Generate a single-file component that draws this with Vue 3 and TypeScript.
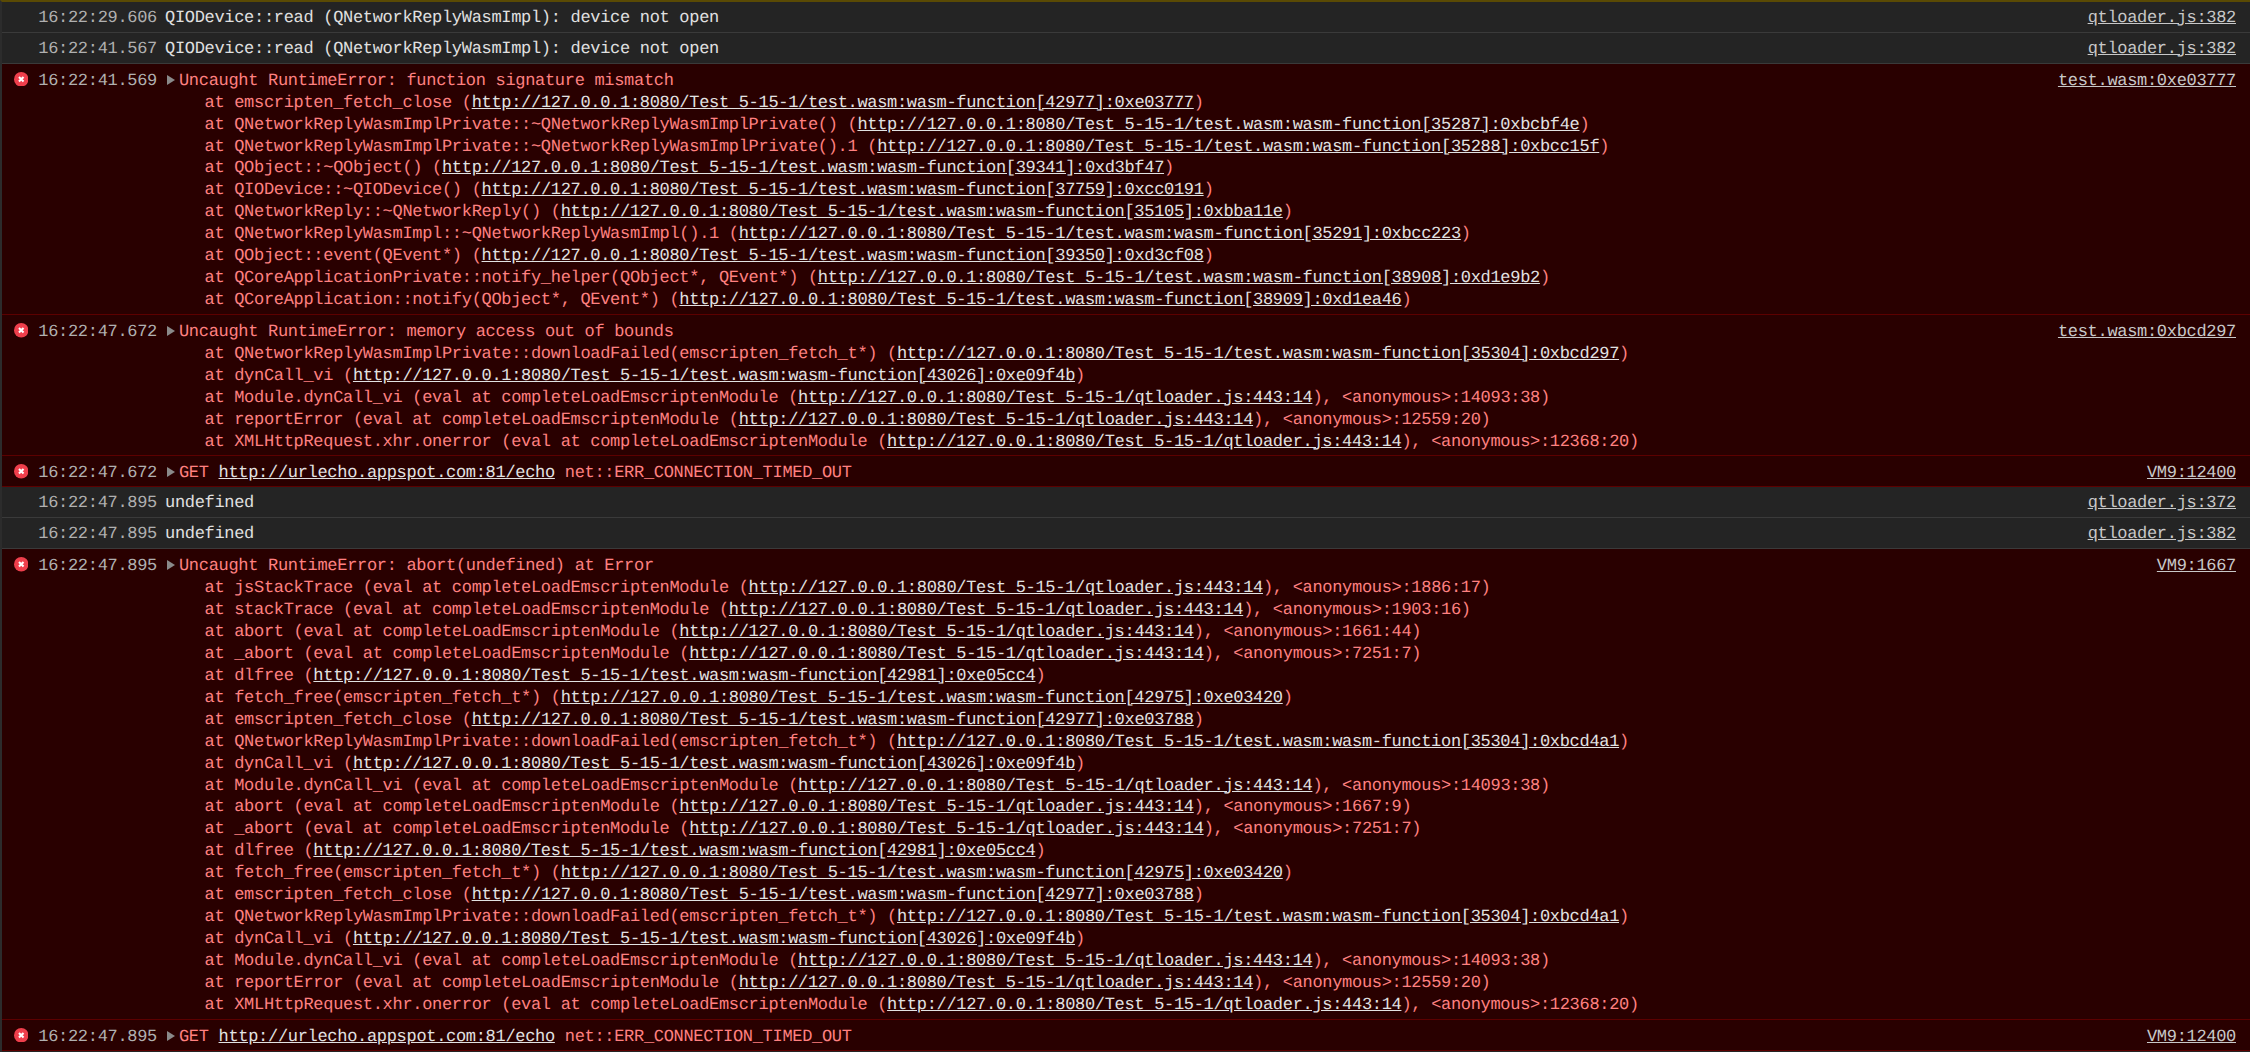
<script setup lang="ts">
type Seg = { t: string; u?: boolean };
type Row = { time: string; err?: boolean; msg?: string; head?: Seg[]; stack?: Seg[][]; src: string };
const B = 'http://127.0.0.1:8080/Test_5-15-1/';
const w = (before: string, url: string): Seg[] => [{ t: '    at ' + before + ' (' }, { t: B + url, u: true }, { t: ')' }];
const q = (before: string, n: string): Seg[] => [{ t: '    at ' + before + ' (eval at completeLoadEmscriptenModule (' }, { t: B + 'qtloader.js:443:14', u: true }, { t: '), <anonymous>:' + n + ')' }];
const wasm = (n: string, a: string) => 'test.wasm:wasm-function[' + n + ']:' + a;
const get: Seg[] = [{ t: 'GET ' }, { t: 'http://urlecho.appspot.com:81/echo', u: true }, { t: ' net::ERR_CONNECTION_TIMED_OUT' }];
const rows: Row[] = [
  { time: '16:22:29.606', msg: 'QIODevice::read (QNetworkReplyWasmImpl): device not open', src: 'qtloader.js:382' },
  { time: '16:22:41.567', msg: 'QIODevice::read (QNetworkReplyWasmImpl): device not open', src: 'qtloader.js:382' },
  { time: '16:22:41.569', err: true, head: [{ t: 'Uncaught RuntimeError: function signature mismatch' }], src: 'test.wasm:0xe03777', stack: [
    w('emscripten_fetch_close', wasm('42977', '0xe03777')),
    w('QNetworkReplyWasmImplPrivate::~QNetworkReplyWasmImplPrivate()', wasm('35287', '0xbcbf4e')),
    w('QNetworkReplyWasmImplPrivate::~QNetworkReplyWasmImplPrivate().1', wasm('35288', '0xbcc15f')),
    w('QObject::~QObject()', wasm('39341', '0xd3bf47')),
    w('QIODevice::~QIODevice()', wasm('37759', '0xcc0191')),
    w('QNetworkReply::~QNetworkReply()', wasm('35105', '0xbba11e')),
    w('QNetworkReplyWasmImpl::~QNetworkReplyWasmImpl().1', wasm('35291', '0xbcc223')),
    w('QObject::event(QEvent*)', wasm('39350', '0xd3cf08')),
    w('QCoreApplicationPrivate::notify_helper(QObject*, QEvent*)', wasm('38908', '0xd1e9b2')),
    w('QCoreApplication::notify(QObject*, QEvent*)', wasm('38909', '0xd1ea46')),
  ] },
  { time: '16:22:47.672', err: true, head: [{ t: 'Uncaught RuntimeError: memory access out of bounds' }], src: 'test.wasm:0xbcd297', stack: [
    w('QNetworkReplyWasmImplPrivate::downloadFailed(emscripten_fetch_t*)', wasm('35304', '0xbcd297')),
    w('dynCall_vi', wasm('43026', '0xe09f4b')),
    q('Module.dynCall_vi', '14093:38'),
    q('reportError', '12559:20'),
    q('XMLHttpRequest.xhr.onerror', '12368:20'),
  ] },
  { time: '16:22:47.672', err: true, head: get, src: 'VM9:12400' },
  { time: '16:22:47.895', msg: 'undefined', src: 'qtloader.js:372' },
  { time: '16:22:47.895', msg: 'undefined', src: 'qtloader.js:382' },
  { time: '16:22:47.895', err: true, head: [{ t: 'Uncaught RuntimeError: abort(undefined) at Error' }], src: 'VM9:1667', stack: [
    q('jsStackTrace', '1886:17'),
    q('stackTrace', '1903:16'),
    q('abort', '1661:44'),
    q('_abort', '7251:7'),
    w('dlfree', wasm('42981', '0xe05cc4')),
    w('fetch_free(emscripten_fetch_t*)', wasm('42975', '0xe03420')),
    w('emscripten_fetch_close', wasm('42977', '0xe03788')),
    w('QNetworkReplyWasmImplPrivate::downloadFailed(emscripten_fetch_t*)', wasm('35304', '0xbcd4a1')),
    w('dynCall_vi', wasm('43026', '0xe09f4b')),
    q('Module.dynCall_vi', '14093:38'),
    q('abort', '1667:9'),
    q('_abort', '7251:7'),
    w('dlfree', wasm('42981', '0xe05cc4')),
    w('fetch_free(emscripten_fetch_t*)', wasm('42975', '0xe03420')),
    w('emscripten_fetch_close', wasm('42977', '0xe03788')),
    w('QNetworkReplyWasmImplPrivate::downloadFailed(emscripten_fetch_t*)', wasm('35304', '0xbcd4a1')),
    w('dynCall_vi', wasm('43026', '0xe09f4b')),
    q('Module.dynCall_vi', '14093:38'),
    q('reportError', '12559:20'),
    q('XMLHttpRequest.xhr.onerror', '12368:20'),
  ] },
  { time: '16:22:47.895', err: true, head: get, src: 'VM9:12400' },
];
</script>

<template>
  <div class="console">
    <div v-for="(r, i) in rows" :key="i" class="row" :class="{ err: r.err, multi: r.stack }">
      <svg v-if="r.err" class="icon" viewBox="0 0 14 14">
        <circle cx="7" cy="7" r="7" fill="#ef3f4c" />
        <path d="M4.8 4.8l4.4 4.4M9.2 4.8l-4.4 4.4" stroke="#fff" stroke-width="2" fill="none" />
      </svg>
      <span class="time">{{ r.time }}</span>
      <div class="body">
        <div v-if="r.msg" class="line plain">{{ r.msg }}</div>
        <template v-else>
          <div class="line"><svg class="tri" viewBox="0 0 8 10"><path d="M0 0l8 5-8 5z" fill="#8a8a8a" /></svg><template v-for="(s, j) in r.head" :key="j"><a v-if="s.u" class="link">{{ s.t }}</a><span v-else>{{ s.t }}</span></template></div>
          <div v-for="(l, k) in r.stack" :key="k" class="line"><template v-for="(s, j) in l" :key="j"><a v-if="s.u" class="link">{{ s.t }}</a><span v-else>{{ s.t }}</span></template></div>
        </template>
      </div>
      <a class="src">{{ r.src }}</a>
    </div>
  </div>
</template>

<style scoped>
.console {
  width: 2250px;
  height: 1052px;
  overflow: hidden;
  box-sizing: border-box;
  background: #242424;
  border-top: 2px solid #5a4a04;
  border-left: 2px solid #2c2c2c;
  font-family: "Liberation Mono", monospace;
  font-size: 17px;
  letter-spacing: -0.31px;
  line-height: 21.95px;
  color: #d5d5d5;
  text-rendering: geometricPrecision;
}
.row {
  position: relative;
  display: flex;
  box-sizing: border-box;
  padding: 5.8px 14px 2.2px 36.3px;
  border-bottom: 1px solid #3a3a3a;
}
.row.err {
  background: #290000;
  border-bottom: 1px solid #5c0000;
  color: #ff8080;
  padding-top: 6.5px;
  padding-bottom: 1.5px;
}
.row.multi {
  padding-top: 6.8px;
  padding-bottom: 1.85px;
}
.row:last-child {
  padding-top: 7.5px;
  padding-bottom: 0.5px;
}
.icon {
  position: absolute;
  left: 11.5px;
  top: 8px;
  width: 14.5px;
  height: 14.5px;
}
.time {
  width: 126.7px;
  flex: none;
  color: #b0b0b0;
}
.body {
  flex: 1;
  min-width: 0;
}
.line {
  white-space: pre;
}
.plain {
  color: #e0e0e0;
}
.tri {
  width: 8px;
  height: 10px;
  margin: 0 4.3px 0 1.7px;
  vertical-align: 0;
}
.link,
.src {
  color: #e2e2e2;
  text-decoration: underline;
}
.src {
  color: #c8c8c8;
  flex: none;
}
</style>
